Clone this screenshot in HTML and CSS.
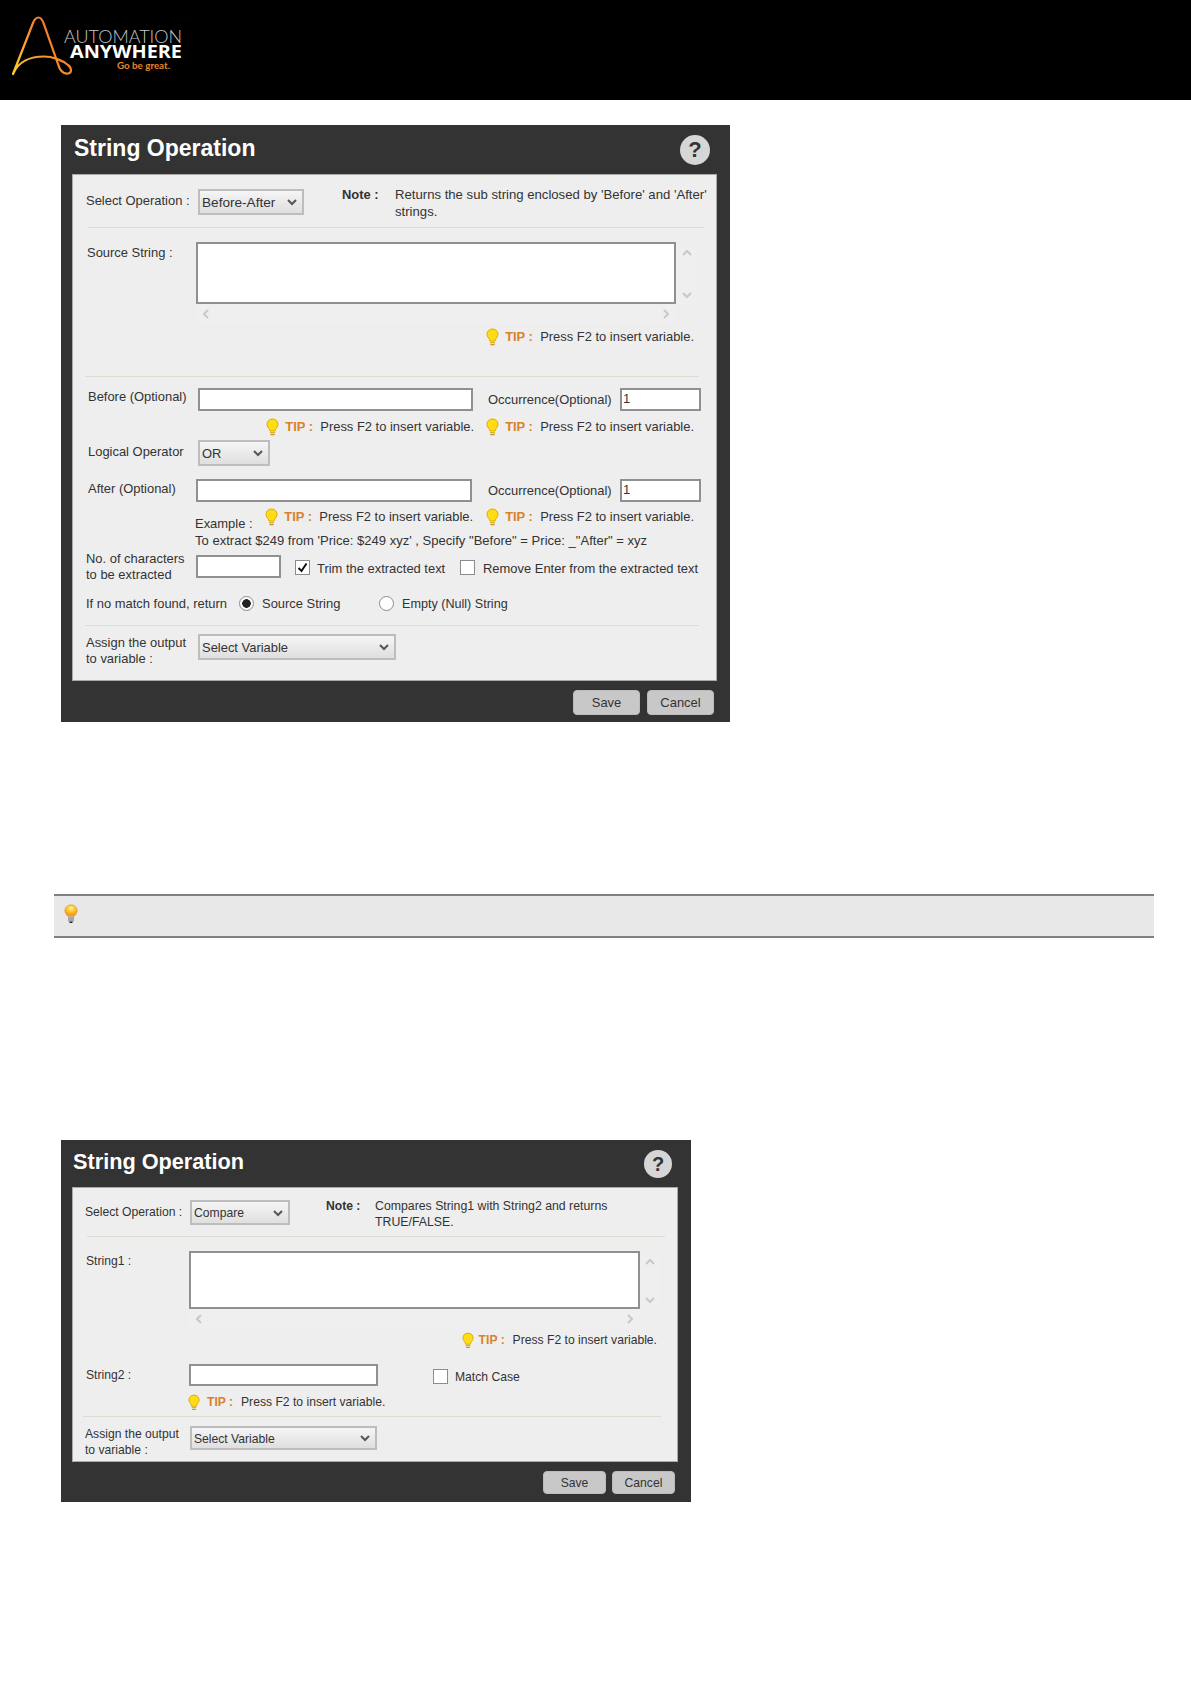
FILE: index.html
```html
<!DOCTYPE html>
<html lang="en">
<head>
<meta charset="utf-8">
<title>String Operation</title>
<link rel="stylesheet" href="styles.css">
</head>
<body>
<svg class="defs" width="0" height="0" aria-hidden="true">
  <defs>
    <symbol id="bulb" viewBox="0 0 13 18">
      <path d="M6.500 1C3.400 1 1 3.300 1 6.200c0 2.300 1.600 3.600 2.400 5.200.3.600.4 1.100.5 1.600h5.200c.1-.5.2-1 .5-1.600.8-1.600 2.400-2.900 2.400-5.200C12 3.300 9.600 1 6.500 1z" fill="#ffdc14" stroke="#e0a800" stroke-width="1"/>
      <path d="M4 14.200h5v1.100H4zM4.400 16h4.200v1.200H4.400z" fill="#c79a10"/>
    </symbol>
    <symbol id="chev-up" viewBox="0 0 10 8"><path d="M1 6l4-4 4 4" fill="none" stroke="#c8c8c8" stroke-width="2"/></symbol>
    <symbol id="chev-down" viewBox="0 0 10 8"><path d="M1 2l4 4 4-4" fill="none" stroke="#c8c8c8" stroke-width="2"/></symbol>
    <symbol id="chev-left" viewBox="0 0 8 10"><path d="M6 1L2 5l4 4" fill="none" stroke="#c8c8c8" stroke-width="2"/></symbol>
    <symbol id="chev-right" viewBox="0 0 8 10"><path d="M2 1l4 4-4 4" fill="none" stroke="#c8c8c8" stroke-width="2"/></symbol>
    <linearGradient id="logo-grad" gradientUnits="userSpaceOnUse" x1="12" y1="74" x2="70" y2="30">
      <stop offset="0" stop-color="#ffd42a"/>
      <stop offset=".5" stop-color="#f9962a"/>
      <stop offset="1" stop-color="#ee5f28"/>
    </linearGradient>
    <radialGradient id="bulb-gloss" cx=".5" cy=".3" r=".7">
      <stop offset="0" stop-color="#fff2a0"/>
      <stop offset=".5" stop-color="#ffc61e"/>
      <stop offset="1" stop-color="#f58a1e"/>
    </radialGradient>
  </defs>
</svg>

<header class="site-header">
  <svg class="logo" width="190" height="80" viewBox="0 0 190 80" role="img" aria-label="Automation Anywhere">
    <path d="M13 74L33 23C35 18 37 17.500 38.500 17.500C40.500 17.500 42 19 43.500 23L58 64C60 71 64 74 68 73.500C72 73 72 68 68 65C62 60 52 56.500 44 56.500C30 56.500 18 62 13 74Z" fill="none" stroke="url(#logo-grad)" stroke-width="2.200" stroke-linejoin="round"/>
    <text class="logo-top" x="64" y="43" textLength="118" lengthAdjust="spacingAndGlyphs">AUTOMATION</text>
    <text class="logo-main" x="70" y="58" textLength="112" lengthAdjust="spacingAndGlyphs">ANYWHERE</text>
    <text class="logo-sub" x="117" y="68.500" textLength="53" lengthAdjust="spacingAndGlyphs">Go be great.</text>
  </svg>
</header>

<section class="dialog dialog-wide">
  <div class="dialog-head">
    <h2 class="dialog-title">String Operation</h2>
    <span class="help">?</span>
  </div>
  <div class="panel">
    <div class="row w-op">
      <label class="label w-op-label">Select Operation :</label>
      <select class="select w-op-select"><option>Before-After</option></select>
      <div class="note w-note">
        <strong class="note-key w-note-key">Note :</strong>
        <p class="note-text w-note-text">Returns the sub string enclosed by 'Before' and 'After' strings.</p>
      </div>
    </div>
    <div class="rule w-rule-1"></div>

    <div class="row w-source">
      <label class="label w-source-label">Source String :</label>
      <div class="scroll-area w-scroll">
        <textarea class="text-box"></textarea>
        <div class="vbar">
          <svg class="chev-v"><use href="#chev-up"/></svg>
          <svg class="chev-v"><use href="#chev-down"/></svg>
        </div>
        <div class="hbar">
          <svg class="chev-h"><use href="#chev-left"/></svg>
          <svg class="chev-h"><use href="#chev-right"/></svg>
        </div>
      </div>
    </div>
    <div class="row tips w-tips w-tips-source">
      <span class="tip"><svg class="bulb"><use href="#bulb"/></svg><b class="tip-key">TIP :</b><span>Press F2 to insert variable.</span></span>
    </div>
    <div class="rule w-rule-2"></div>

    <div class="row w-before">
      <label class="label w-before-label">Before (Optional)</label>
      <input class="input w-long" type="text">
      <label class="label w-occ">Occurrence(Optional)</label>
      <input class="input w-short" type="text" value="1">
    </div>
    <div class="row tips w-tips w-tips-gap">
      <span class="tip"><svg class="bulb"><use href="#bulb"/></svg><b class="tip-key">TIP :</b><span>Press F2 to insert variable.</span></span>
      <span class="tip"><svg class="bulb"><use href="#bulb"/></svg><b class="tip-key">TIP :</b><span>Press F2 to insert variable.</span></span>
    </div>

    <div class="row w-logical">
      <label class="label w-logical-label">Logical Operator</label>
      <select class="select w-logical-select"><option>OR</option></select>
    </div>

    <div class="row w-after">
      <label class="label w-after-label">After (Optional)</label>
      <input class="input w-long-after" type="text">
      <label class="label w-occ w-occ-after">Occurrence(Optional)</label>
      <input class="input w-short" type="text" value="1">
    </div>
    <div class="row w-example">
      <span class="w-example-label">Example :</span>
      <span class="tip w-example-tip"><svg class="bulb"><use href="#bulb"/></svg><b class="tip-key">TIP :</b><span>Press F2 to insert variable.</span></span>
      <span class="tip"><svg class="bulb"><use href="#bulb"/></svg><b class="tip-key">TIP :</b><span>Press F2 to insert variable.</span></span>
    </div>
    <div class="row w-extract">To extract $249 from 'Price: $249 xyz' , Specify "Before" = Price: _"After" = xyz</div>

    <div class="row w-chars">
      <label class="label w-chars-label">No. of characters<br>to be extracted</label>
      <input class="input w-chars-input" type="text">
      <input class="check w-check-1" type="checkbox" checked>
      <label class="label w-trim">Trim the extracted text</label>
      <input class="check" type="checkbox">
      <label class="label w-remove">Remove Enter from the extracted text</label>
    </div>

    <div class="row w-match">
      <label class="label w-match-label">If no match found, return</label>
      <input class="radio" type="radio" name="match-a" checked>
      <label class="label w-radio-1">Source String</label>
      <input class="radio" type="radio" name="match-a">
      <label class="label w-radio-2">Empty (Null) String</label>
    </div>
    <div class="rule w-rule-3"></div>

    <div class="row w-assign">
      <label class="label w-assign-label">Assign the output<br>to variable :</label>
      <select class="select w-assign-select"><option>Select Variable</option></select>
    </div>
  </div>
  <div class="dialog-foot">
    <button class="btn" type="button">Save</button>
    <button class="btn" type="button">Cancel</button>
  </div>
</section>

<div class="tip-bar">
  <svg class="tip-bar-bulb" width="14" height="20" viewBox="0 0 14 20">
    <path d="M7 1C3.600 1 1 3.500 1 6.600c0 2.400 1.600 3.700 2.500 5.400h7C11.400 10.300 13 9 13 6.600 13 3.500 10.400 1 7 1z" fill="url(#bulb-gloss)" stroke="#ef9a3a"/>
    <rect x="4" y="12.500" width="6" height="5" fill="#a8a8a8"/>
    <rect x="5.500" y="17.500" width="3" height="1.500" fill="#222"/>
  </svg>
</div>

<section class="dialog dialog-narrow">
  <div class="dialog-head">
    <h2 class="dialog-title">String Operation</h2>
    <span class="help">?</span>
  </div>
  <div class="panel">
    <div class="row n-op">
      <label class="label n-op-label">Select Operation :</label>
      <select class="select n-op-select"><option>Compare</option></select>
      <div class="note n-note">
        <strong class="note-key n-note-key">Note :</strong>
        <p class="note-text n-note-text">Compares String1 with String2 and returns TRUE/FALSE.</p>
      </div>
    </div>
    <div class="rule n-rule-1"></div>

    <div class="row n-source">
      <label class="label n-source-label">String1 :</label>
      <div class="scroll-area n-scroll">
        <textarea class="text-box"></textarea>
        <div class="vbar n-vbar">
          <svg class="chev-v"><use href="#chev-up"/></svg>
          <svg class="chev-v"><use href="#chev-down"/></svg>
        </div>
        <div class="hbar">
          <svg class="chev-h"><use href="#chev-left"/></svg>
          <svg class="chev-h"><use href="#chev-right"/></svg>
        </div>
      </div>
    </div>
    <div class="row tips n-tips">
      <span class="tip"><svg class="bulb"><use href="#bulb"/></svg><b class="tip-key">TIP :</b><span>Press F2 to insert variable.</span></span>
    </div>

    <div class="row n-string2">
      <label class="label n-source-label">String2 :</label>
      <input class="input n-input" type="text">
      <input class="check n-check" type="checkbox">
      <label class="label n-match">Match Case</label>
    </div>
    <div class="row n-tip-left">
      <span class="tip"><svg class="bulb"><use href="#bulb"/></svg><b class="tip-key">TIP :</b><span>Press F2 to insert variable.</span></span>
    </div>
    <div class="rule n-rule-2"></div>

    <div class="row n-assign">
      <label class="label n-assign-label">Assign the output<br>to variable :</label>
      <select class="select n-assign-select"><option>Select Variable</option></select>
    </div>
  </div>
  <div class="dialog-foot">
    <button class="btn" type="button">Save</button>
    <button class="btn" type="button">Cancel</button>
  </div>
</section>
</body>
</html>
```

FILE: styles.css
```css
* { box-sizing: border-box; }
html, body { margin: 0; padding: 0; background: #fff; }
body { font-family: "Liberation Sans", Arial, sans-serif; color: #333; height: 1684px; overflow: hidden; }
.defs { position: absolute; }

.site-header { height: 100px; background: #000; }
.logo { display: block; }
.logo-top { font-family: Lato, sans-serif; font-weight: 300; font-size: 17px; fill: #c4c4c4; }
.logo-main { font-family: "Open Sans", sans-serif; font-weight: 700; font-size: 18px; fill: #fff; }
.logo-sub { font-family: Lato, sans-serif; font-weight: 700; font-size: 9px; fill: #e8862a; }

.dialog { background: #333; }
.dialog-head { display: flex; justify-content: space-between; }
.dialog-title { margin: 0; color: #fff; font-weight: 700; }
.help { display: flex; align-items: center; justify-content: center; border-radius: 50%; background: #d6d6d6; color: #333; font-weight: 700; }
.panel { background: #eee; border: 1px solid #a9a9a9; }
.dialog-foot { display: flex; justify-content: flex-end; }
.btn { padding: 0; border: 1px solid #bbb; border-radius: 4px; background: #c8c8c8; color: #333; font-family: inherit; }

.row { display: flex; align-items: flex-start; }
.rule { height: 1px; background: #dcdcd0; }
.label { display: block; flex: none; line-height: 16px; }
.select { flex: none; appearance: none; -webkit-appearance: none; border: 2px solid #bdbdbd; border-radius: 0; padding: 1px 0 0 2px; color: #333; font-family: inherit; font-size: inherit; background-color: #e8e8e8; background-image: url("data:image/svg+xml,%3Csvg xmlns='http://www.w3.org/2000/svg' width='10' height='8'%3E%3Cpath d='M1 2l4 4 4-4' fill='none' stroke='%23555' stroke-width='2'/%3E%3C/svg%3E"), linear-gradient(#f5f5f5, #dfdfdf); background-repeat: no-repeat, no-repeat; background-position: right 5px center, 0 0; }
.input, .text-box { flex: none; display: block; border: 2px solid #909090; border-radius: 0; background: #fff; padding: 0 0 3px 1px; margin: 0; color: #333; font-family: inherit; font-size: inherit; line-height: 14px; }
.text-box { resize: none; width: 100%; height: 100%; }
.check, .radio { flex: none; appearance: none; -webkit-appearance: none; margin: 0; width: 15px; height: 15px; background: #fff no-repeat center; }
.check { border: 1px solid #8c8c8c; }
.check:checked { background-image: url("data:image/svg+xml,%3Csvg xmlns='http://www.w3.org/2000/svg' width='11' height='11'%3E%3Cpath d='M1.500 6l3 3 5-7.500' fill='none' stroke='%23111' stroke-width='2'/%3E%3C/svg%3E"); }
.radio { border: 1px solid #8c8c8c; border-radius: 50%; }
.radio:checked { background-image: radial-gradient(circle, #222 0 4px, transparent 4.600px); }

.scroll-area { flex: none; display: grid; }
.vbar { display: flex; flex-direction: column; justify-content: space-between; align-items: center; padding: 7px 0 5px 0; background: #efefef; }
.hbar { display: flex; justify-content: space-between; align-items: center; padding: 0 6px; background: #efefef; }
.chev-v { display: block; width: 10px; height: 8px; }
.chev-h { display: block; width: 8px; height: 10px; }

.tips { justify-content: flex-end; }
.tip { display: flex; align-items: center; flex: none; height: 18px; line-height: 16px; white-space: nowrap; }
.bulb { display: block; flex: none; width: 13px; height: 18px; margin-right: 6px; }
.tip-key { display: block; flex: none; color: #d9822b; font-weight: 700; }
.note { display: flex; align-items: flex-start; flex: none; }
.note-key { display: block; flex: none; font-weight: 700; color: #333; }
.note-text { margin: 0; }

/* Wide dialog */
.dialog-wide { width: 669px; height: 597px; margin: 25px 0 0 61px; padding: 0 13px 0 11px; font-size: 12.95px; }
.dialog-wide .dialog-head { height: 49px; margin: 0 -13px 0 -11px; padding: 8px 20px 0 13px; }
.dialog-wide .dialog-title { font-size: 23px; line-height: 30px; }
.dialog-wide .help { width: 30px; height: 30px; margin-top: 2px; font-size: 22px; }
.dialog-wide .panel { height: 507px; }
.dialog-wide .dialog-foot { gap: 7px; padding-top: 9px; margin-right: 3px; }
.dialog-wide .btn { width: 67px; height: 25px; font-size: 12.95px; }
.dialog-wide .tip-key { width: 35px; }

.w-op { height: 52px; padding: 14px 0 0 13px; }
.w-op-label { width: 112px; line-height: 24px; }
.w-op-select { width: 106px; height: 26px; font-size: 13.6px; }
.w-note { margin: -3px 0 0 38px; line-height: 17px; }
.w-note-key { width: 53px; }
.w-note-text { width: 320px; font-size: 13.15px; }
.w-rule-1 { margin: 0 12px 0 15px; }
.w-source { height: 99px; padding: 14px 0 0 14px; }
.w-source-label { width: 109px; margin-top: 3px; }
.w-scroll { grid-template-columns: 480px 22px; grid-template-rows: 62px 20px; }
.w-tips { padding-right: 22px; }
.w-tips-source { height: 18px; margin-bottom: 31px; padding-top: 1px; }
.w-rule-2 { margin: 0 17px 0 12px; }
.w-before { height: 41px; padding: 11px 0 0 15px; }
.w-before-label { width: 110px; margin-top: 1px; }
.w-long { width: 275px; height: 23px; }
.w-occ { width: 132px; margin: 4px 0 0 15px; }
.w-short { width: 81px; height: 23px; }
.w-tips-gap { height: 18px; gap: 12px; }
.w-logical { height: 26px; margin-top: 4px; padding-left: 15px; }
.w-logical-label { width: 110px; margin-top: 4px; }
.w-logical-select { width: 72px; height: 26px; }
.w-after { height: 36px; padding: 13px 0 0 15px; }
.w-after-label { width: 108px; margin-top: 2px; }
.w-long-after { width: 276px; height: 23px; }
.w-occ-after { margin-left: 16px; }
.w-example { height: 25px; margin-top: 6px; padding: 0 22px 0 122px; }
.w-example-label { margin-top: 8px; line-height: 16px; }
.w-example-tip { margin: 0 13px 0 auto; }
.w-extract { height: 16px; padding-left: 122px; line-height: 16px; font-size: 13.05px; }
.w-chars { height: 27px; margin-top: 2px; padding-left: 13px; }
.w-chars-label { width: 110px; }
.w-chars-input { width: 85px; height: 23px; margin-top: 4px; }
.w-check-1 { margin: 9px 0 0 14px; }
.w-chars .check { margin-top: 9px; }
.w-trim { width: 143px; margin: 10px 0 0 7px; }
.w-remove { margin: 10px 0 0 8px; }
.w-match { height: 16px; margin-top: 18px; padding-left: 13px; }
.w-match-label { width: 153px; }
.w-radio-1 { width: 117px; margin-left: 8px; }
.w-radio-2 { margin-left: 8px; font-size: 12.6px; }
.w-rule-3 { margin: 13px 17px 0 12px; }
.w-assign { height: 53px; padding: 8px 0 0 13px; }
.w-assign-label { width: 112px; margin-top: 1px; }
.w-assign-select { width: 198px; height: 26px; }

/* Grey tip bar */
.tip-bar { width: 1100px; height: 44px; margin: 172px 0 0 54px; padding: 8px 0 0 10px; border-top: 2px solid #808080; border-bottom: 2px solid #808080; background: #e8e8e8; }
.tip-bar-bulb { display: block; }

/* Narrow dialog */
.dialog-narrow { width: 630px; height: 362px; margin: 202px 0 0 61px; padding: 0 13px 0 11px; font-size: 12.15px; }
.dialog-narrow .dialog-head { height: 47px; margin: 0 -13px 0 -11px; padding: 8px 19px 0 12px; }
.dialog-narrow .dialog-title { font-size: 21.7px; line-height: 28px; }
.dialog-narrow .help { width: 28px; height: 28px; margin-top: 2px; font-size: 20px; }
.dialog-narrow .panel { height: 275px; }
.dialog-narrow .dialog-foot { gap: 6px; padding-top: 9px; margin-right: 3px; }
.dialog-narrow .btn { width: 63px; height: 23px; font-size: 12.15px; }
.dialog-narrow .tip-key { width: 34px; }
.dialog-narrow .bulb { width: 12px; height: 17px; margin-right: 5px; }

.n-op { height: 48px; padding: 12px 0 0 12px; }
.n-op-label { width: 105px; line-height: 24px; }
.n-op-select { width: 100px; height: 25px; }
.n-note { margin: -2px 0 0 36px; line-height: 16px; }
.n-note-key { width: 49px; }
.n-note-text { width: 262px; font-size: 12.3px; }
.n-rule-1 { margin: 0 12px 0 14px; }
.n-source { height: 94px; padding: 14px 0 0 13px; }
.n-source-label { width: 103px; margin-top: 2px; }
.n-scroll { grid-template-columns: 451px 20px; grid-template-rows: 58px 20px; }
.n-tips { height: 18px; padding-right: 20px; }
.n-string2 { height: 22px; margin-top: 15px; padding-left: 13px; }
.n-string2 .n-source-label { margin-top: 3px; }
.n-input { width: 189px; height: 22px; }
.n-check { margin: 5px 0 0 55px; }
.n-match { margin: 5px 0 0 7px; }
.n-tip-left { height: 18px; margin-top: 7px; padding-left: 115px; }
.n-tip-left .bulb { margin-right: 7px; }
.n-rule-2 { margin: 5px 16px 0 10px; }
.n-assign { height: 43px; padding: 9px 0 0 12px; }
.n-assign-label { width: 105px; margin-top: 0; }
.n-assign-select { width: 187px; height: 24px; }
```
